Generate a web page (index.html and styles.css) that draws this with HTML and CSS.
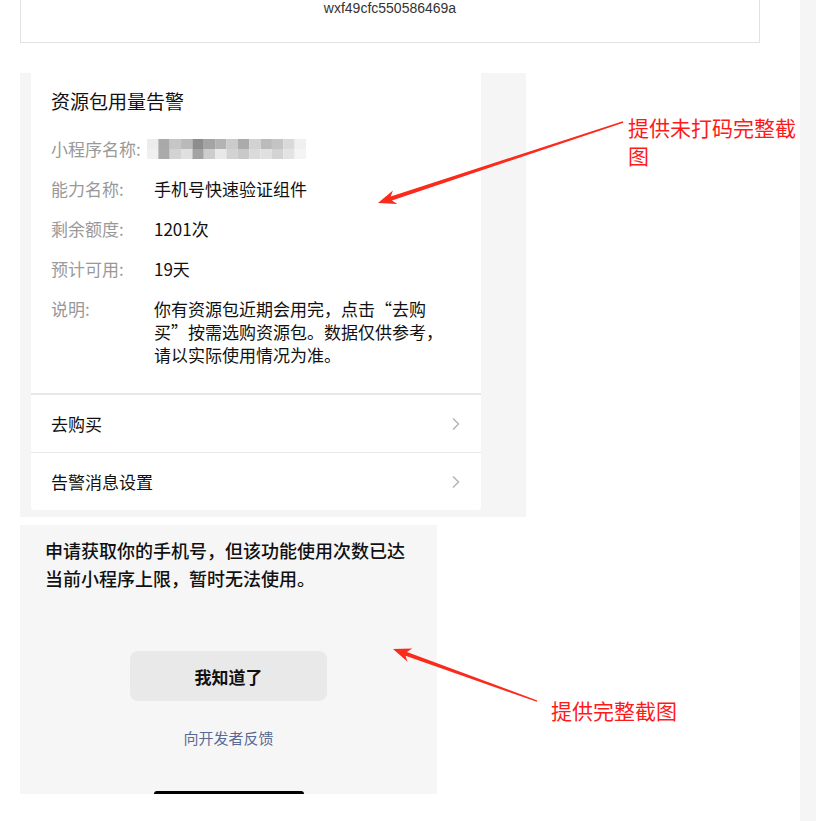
FILE: index.html
```html
<!DOCTYPE html>
<html lang="zh-CN">
<head>
  <meta charset="UTF-8" />
  <meta name="viewport" content="width=device-width, initial-scale=1.0" />
  <title>资源包用量告警</title>
  <link rel="stylesheet" href="styles.css">
</head>
<body>
  <div class="page">
    <div class="appid">wxf49cfc550586469a</div>

    <div class="shot-alert">
      <div class="card">
        <div class="card-body">
          <div class="card-title">资源包用量告警</div>
          <div class="info">
            <div class="info-row">
              <span class="info-label">小程序名称:</span>
              <span class="info-value">
                <svg class="masked" width="159" height="22" viewBox="0 0 154 22" preserveAspectRatio="none">
                  <g>
                    <rect x="0" y="1" width="11" height="10" fill="#ececec"/>
                    <rect x="11" y="1" width="11" height="10" fill="#a9a9a9"/>
                    <rect x="22" y="1" width="11" height="10" fill="#c6c6c6"/>
                    <rect x="33" y="1" width="11" height="10" fill="#b9b9b9"/>
                    <rect x="44" y="1" width="11" height="10" fill="#8d8d8d"/>
                    <rect x="55" y="1" width="11" height="10" fill="#a4a4a4"/>
                    <rect x="66" y="1" width="11" height="10" fill="#b3b3b3"/>
                    <rect x="77" y="1" width="11" height="10" fill="#cbcbcb"/>
                    <rect x="88" y="1" width="11" height="10" fill="#ababab"/>
                    <rect x="99" y="1" width="11" height="10" fill="#d2d2d2"/>
                    <rect x="110" y="1" width="11" height="10" fill="#bbbbbb"/>
                    <rect x="121" y="1" width="11" height="10" fill="#c4c4c4"/>
                    <rect x="132" y="1" width="11" height="10" fill="#d9d9d9"/>
                    <rect x="143" y="1" width="11" height="10" fill="#f0f0f0"/>
                    <rect x="0" y="11" width="11" height="10" fill="#f0f0f0"/>
                    <rect x="11" y="11" width="11" height="10" fill="#aaaaaa"/>
                    <rect x="22" y="11" width="11" height="10" fill="#d3d3d3"/>
                    <rect x="33" y="11" width="11" height="10" fill="#e0e0e0"/>
                    <rect x="44" y="11" width="11" height="10" fill="#a3a3a3"/>
                    <rect x="55" y="11" width="11" height="10" fill="#cdcdcd"/>
                    <rect x="66" y="11" width="11" height="10" fill="#e8e8e8"/>
                    <rect x="77" y="11" width="11" height="10" fill="#d2d2d2"/>
                    <rect x="88" y="11" width="11" height="10" fill="#c9c9c9"/>
                    <rect x="99" y="11" width="11" height="10" fill="#dadada"/>
                    <rect x="110" y="11" width="11" height="10" fill="#e0e0e0"/>
                    <rect x="121" y="11" width="11" height="10" fill="#d3d3d3"/>
                    <rect x="132" y="11" width="11" height="10" fill="#e3e3e3"/>
                    <rect x="143" y="11" width="11" height="10" fill="#f4f4f4"/>
                  </g>
                </svg>
              </span>
            </div>
            <div class="info-row">
              <span class="info-label">能力名称:</span>
              <span class="info-value">手机号快速验证组件</span>
            </div>
            <div class="info-row">
              <span class="info-label">剩余额度:</span>
              <span class="info-value">1201次</span>
            </div>
            <div class="info-row">
              <span class="info-label">预计可用:</span>
              <span class="info-value">19天</span>
            </div>
            <div class="info-row desc">
              <span class="info-label">说明:</span>
              <span class="info-value">你有资源包近期会用完，点击“去购买”按需选购资源包。数据仅供参考，请以实际使用情况为准。</span>
            </div>
          </div>
        </div>

        <div class="link-row">
          <span>去购买</span>
          <svg class="chevron" width="8" height="14" viewBox="0 0 8 14"><path d="M1 1.5 L6.5 7 L1 12.5" fill="none" stroke="#b2b2b2" stroke-width="1.4"/></svg>
        </div>
        <div class="link-row">
          <span>告警消息设置</span>
          <svg class="chevron" width="8" height="14" viewBox="0 0 8 14"><path d="M1 1.5 L6.5 7 L1 12.5" fill="none" stroke="#b2b2b2" stroke-width="1.4"/></svg>
        </div>
      </div>
    </div>

    <div class="shot-dialog">
      <div class="dialog-text">申请获取你的手机号，但该功能使用次数已达当前小程序上限，暂时无法使用。</div>
      <button class="dialog-btn">我知道了</button>
      <div class="dialog-link">向开发者反馈</div>
      <div class="home-bar"></div>
    </div>
  </div>

  <div class="track"></div>

  <!-- annotations drawn over the screenshots -->
  <svg class="marks" width="816" height="821" viewBox="0 0 816 821">
    <polygon fill="#fa2a1c" points="378,203 392.9,190.6 390.7,196.6 622.8,121.2 623.3,122.8 391.9,200.4 397.3,203.9"/>
    <polygon fill="#fa2a1c" points="393,649 412.3,648.5 406.9,651.9 537.3,700.4 536.8,701.8 405.5,655.7 407.5,661.7"/>
  </svg>
  <div class="note note-top">提供未打码完整截图</div>
  <div class="note note-bottom">提供完整截图</div>
</body>
</html>
```

FILE: styles.css
```css
body {
  margin: 0;
  display: flex;
  height: 821px;
  overflow: hidden;
  position: relative;
  background: #fff;
  color: #111;
  font-family: "Noto Sans CJK SC", "Microsoft YaHei", sans-serif;
}

.page {
  width: 800px;
  padding-left: 20px;
  box-sizing: border-box;
}

.track {
  width: 16px;
  background: #f5f5f5;
}

.appid {
  width: 740px;
  height: 43px;
  box-sizing: border-box;
  border: 1px solid #e2e2e2;
  border-top: none;
  text-align: center;
  font: 14px/16px "Liberation Sans", Arial, sans-serif;
  color: #333;
}

/* first screenshot */
.shot-alert {
  margin-top: 30px;
  width: 506px;
  box-sizing: border-box;
  padding: 0 45px 7px 11px;
  background: #f5f5f5;
}

.card {
  background: #fff;
  border-radius: 0 0 4px 4px;
}

.card-body {
  padding: 16px 20px 27px;
  border-bottom: 2px solid #e8e8e8;
}

.card-title {
  font-size: 19px;
  line-height: 24px;
  margin-bottom: 24px;
}

.info {
  display: flex;
  flex-direction: column;
  gap: 16px;
}

.info-row {
  display: flex;
  font-size: 17px;
  line-height: 24px;
}

.info-label {
  width: 103px;
  flex: none;
  color: #999;
}

.info-value {
  width: 290px;
}

.info-row.desc {
  line-height: 23px;
}

.masked {
  display: block;
  margin: 1px 0 0 -7px;
  filter: blur(0.6px);
}

.link-row {
  display: flex;
  align-items: center;
  justify-content: space-between;
  height: 57px;
  padding: 0 21px 0 20px;
  font-size: 17px;
}

.link-row + .link-row {
  border-top: 1px solid #e8e8e8;
}

/* second screenshot */
.shot-dialog {
  margin-top: 8px;
  width: 417px;
  height: 269px;
  box-sizing: border-box;
  padding-top: 11px;
  background: #f6f6f6;
  display: flex;
  flex-direction: column;
  align-items: center;
  overflow: hidden;
}

.dialog-text {
  align-self: stretch;
  padding: 0 24px 0 25px;
  font-size: 18px;
  line-height: 28px;
  font-weight: 500;
}

.dialog-btn {
  margin-top: 59px;
  width: 197px;
  height: 50px;
  flex: none;
  border: none;
  border-radius: 8px;
  background: #e9e9e9;
  color: #111;
  font-family: inherit;
  font-size: 17px;
  font-weight: 700;
}

.dialog-link {
  margin-top: 27px;
  font-size: 15px;
  line-height: 20px;
  color: #576b95;
}

.home-bar {
  margin-top: 43px;
  width: 150px;
  height: 6px;
  flex: none;
  border-radius: 3px;
  background: #000;
}

/* red annotations */
.marks {
  position: absolute;
  left: 0;
  top: 0;
  pointer-events: none;
}

.note {
  position: absolute;
  color: #ff1a1a;
  font-size: 21px;
  line-height: 28px;
}

.note-top {
  left: 628px;
  top: 113px;
  width: 172px;
}

.note-bottom {
  left: 551px;
  top: 696px;
}
```
